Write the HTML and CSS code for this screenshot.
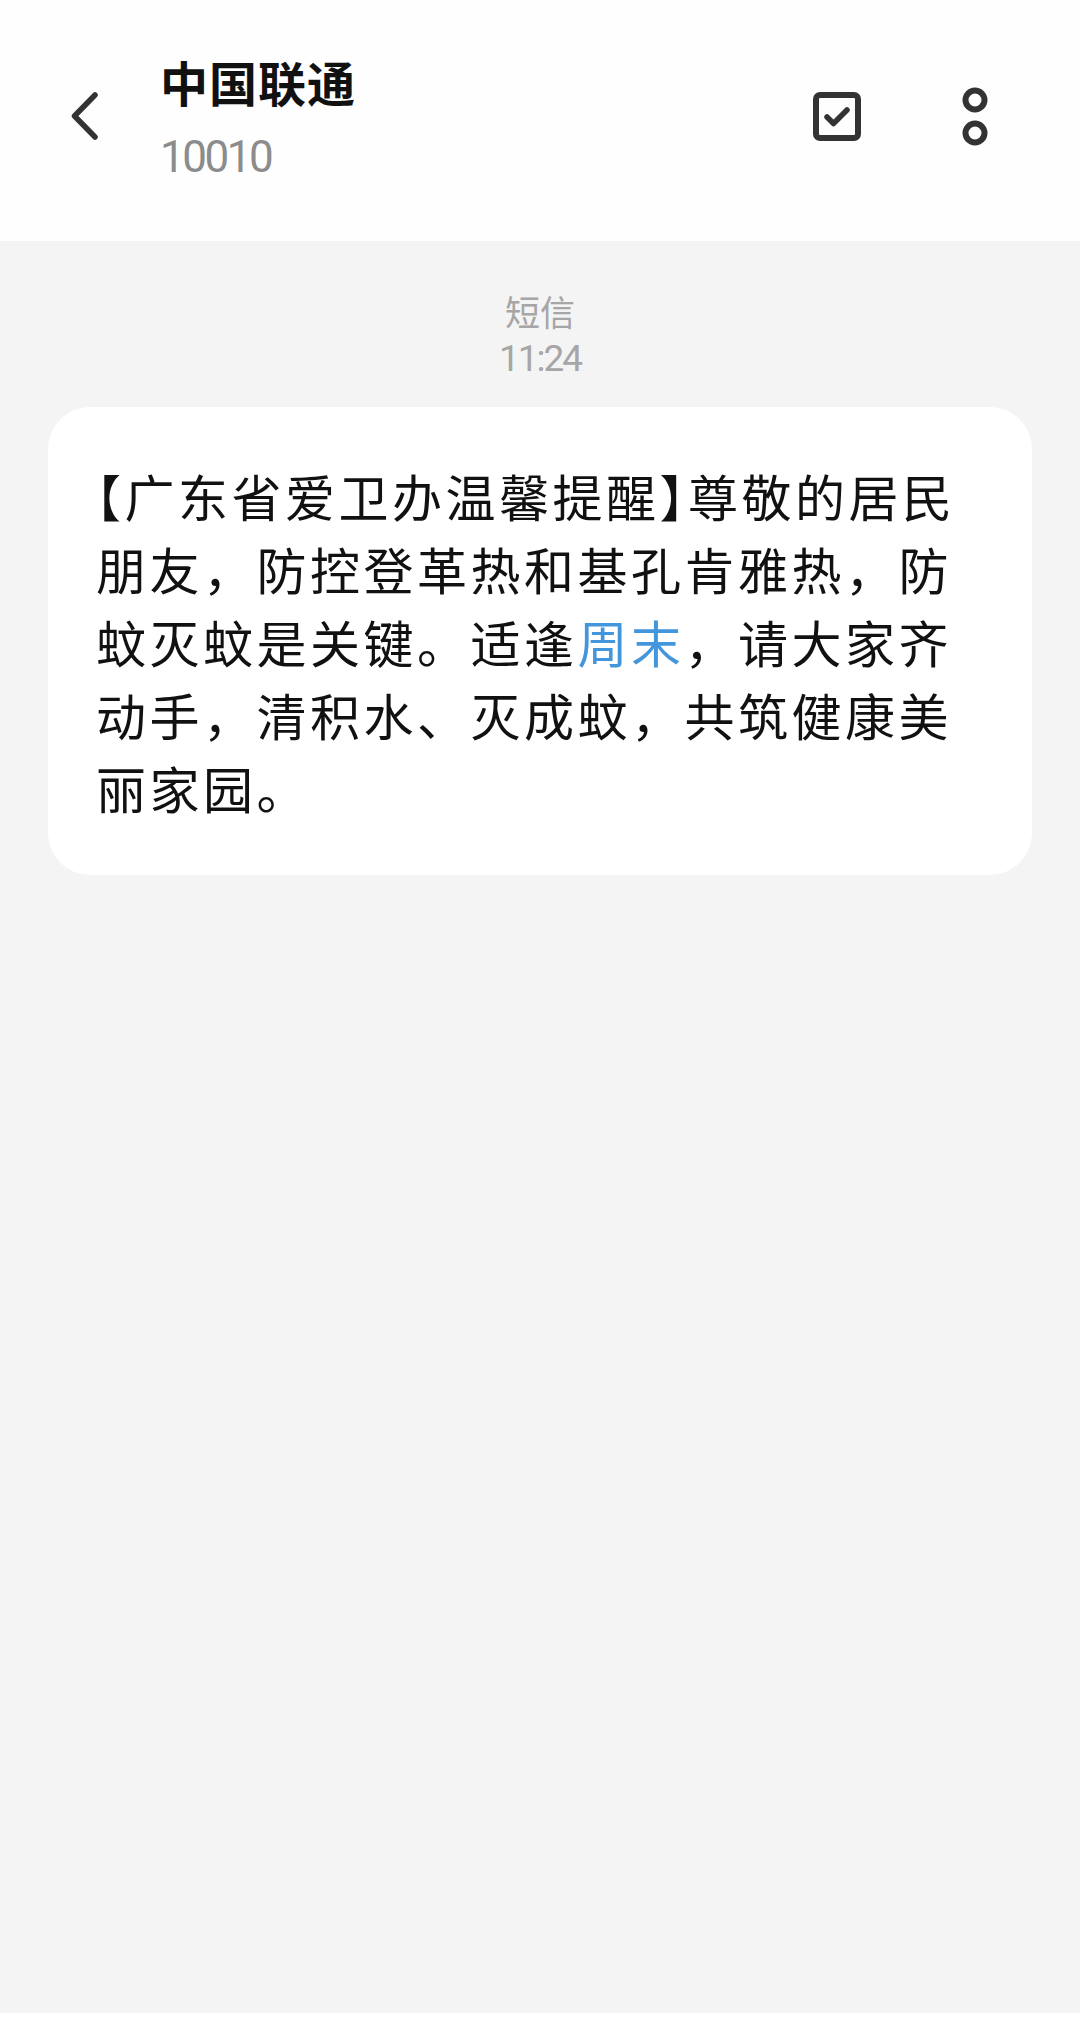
FILE: index.html
```html
<!DOCTYPE html>
<html lang="zh-CN">
<head>
    <meta charset="UTF-8">
    <meta name="viewport" content="width=device-width, initial-scale=1.0">
    <title>中国联通</title>
    <link rel="stylesheet" href="styles.css">
</head>
<body>
    <div class="sayfa">
        <header class="ust">
            <svg class="geri" width="60" height="60" viewBox="0 0 60 60">
                <path d="M41 9 L20.5 30 L41 51" fill="none" stroke="#333" stroke-width="5.5" stroke-linecap="round" stroke-linejoin="round"/>
            </svg>
            <div class="baslik">
                <div class="isim">中国联通</div>
                <div class="numara">10010</div>
            </div>
            <div class="bosluk"></div>
            <svg class="sec" width="60" height="60" viewBox="0 0 60 60">
                <rect x="9" y="9" width="42" height="43" rx="4" fill="none" stroke="#333" stroke-width="6"/>
                <path d="M20 31 L26.5 37.5 L40 24" fill="none" stroke="#333" stroke-width="5.5" stroke-linecap="round" stroke-linejoin="round"/>
            </svg>
            <svg class="menu" width="60" height="60" viewBox="0 0 60 60">
                <circle cx="30" cy="14" r="9.5" fill="none" stroke="#333" stroke-width="6"/>
                <circle cx="30" cy="47" r="9.5" fill="none" stroke="#333" stroke-width="6"/>
            </svg>
        </header>

        <main class="akis">
            <div class="zaman">
                <div class="tur">短信</div>
                <div class="saat">11:24</div>
            </div>
            <div class="balon">
                <p class="mesaj"><span class="parantez">【</span>广东省爱卫办温馨提醒<span class="parantez">】</span>尊敬的居民朋友，防控登革热和基孔肯雅热，防蚊灭蚊是关键。适逢<span class="link">周末</span>，请大家齐动手，清积水、灭成蚊，共筑健康美丽家园。</p>
            </div>
        </main>

        <div class="alt"></div>
    </div>
</body>
</html>
```

FILE: styles.css
```css
body {
    margin: 0;
    background-color: #ffffff;
    font-family: "Noto Sans CJK SC", "Noto Sans", sans-serif;
}
.sayfa {
    display: flex;
    flex-direction: column;
    height: 2029px;
}
.ust {
    display: flex;
    align-items: center;
    height: 231px;
    padding-bottom: 10px;
    padding-left: 54px;
    padding-right: 75px;
    background-color: #fefefe;
}
.geri {
    display: block;
}
.baslik {
    margin-left: 46px;
    display: flex;
    flex-direction: column;
}
.isim {
    font-size: 48px;
    font-weight: 700;
    color: #111;
    line-height: 70px;
    letter-spacing: 1px;
}
.numara {
    font-family: Roboto, "Noto Sans", sans-serif;
    font-size: 44px;
    letter-spacing: -2.5px;
    color: #8c8c8c;
    line-height: 56px;
    margin-top: 13px;
}
.bosluk {
    flex: 1;
}
.sec {
    display: block;
}
.menu {
    display: block;
    margin-left: 78px;
}
.akis {
    flex: 1;
    background-color: #f4f4f4;
    display: flex;
    flex-direction: column;
}
.zaman {
    display: flex;
    flex-direction: column;
    align-items: center;
    padding-top: 44px;
    padding-bottom: 24px;
    color: #a6a6a6;
}
.tur {
    font-size: 35px;
    line-height: 52px;
}
.saat {
    font-family: Roboto, "Noto Sans", sans-serif;
    font-size: 37px;
    letter-spacing: -2px;
    line-height: 48px;
    margin-top: -2px;
}
.balon {
    margin: 0 48px;
    background-color: #ffffff;
    border-radius: 42px;
    padding: 52px 52px 51px 48px;
}
.mesaj {
    margin: 0;
    font-size: 50px;
    line-height: 73px;
    letter-spacing: 3.5px;
    color: #111;
}
.parantez {
    font-feature-settings: "halt";
}
.link {
    color: #4396db;
}
.alt {
    height: 16px;
    background-color: #ffffff;
}
```
